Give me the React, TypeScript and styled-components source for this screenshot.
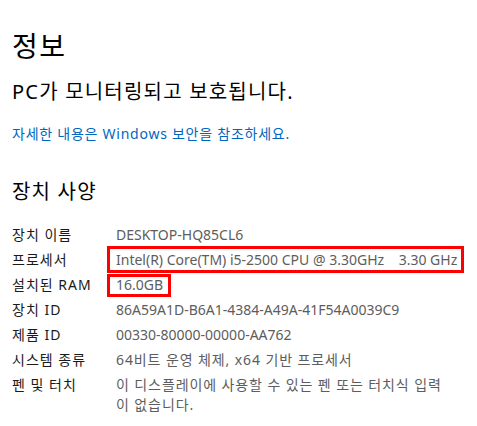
import React from 'react';
import styled, { createGlobalStyle } from 'styled-components';

const GlobalStyle = createGlobalStyle`
  html, body {
    margin: 0;
    padding: 0;
    background: #ffffff;
  }
  body {
    font-family: 'Noto Sans', 'Noto Sans CJK KR', sans-serif;
    color: #000000;
  }
`;

const Page = styled.main`
  width: 477px;
  height: 426px;
  box-sizing: border-box;
  padding: 24px 0 0 12px;
  overflow: hidden;
`;

const Title = styled.h1`
  margin: 0;
  font-size: 28px;
  font-weight: 400;
  line-height: 44px;
  letter-spacing: 1.5px;
`;

const Status = styled.h2`
  margin: 10px 0 0;
  font-size: 20px;
  font-weight: 400;
  line-height: 28px;
  letter-spacing: 1.2px;
`;

const Link = styled.a`
  display: block;
  margin-top: 16px;
  font-size: 14px;
  line-height: 24px;
  color: #0067c0;
  text-decoration: none;
  letter-spacing: 0.75px;
`;

const SectionTitle = styled.h3`
  margin: 32px 0 0;
  font-size: 20px;
  font-weight: 400;
  line-height: 28px;
  letter-spacing: 1.2px;
`;

const SpecList = styled.dl`
  margin: 19px 0 0;
  display: grid;
  grid-template-columns: 104px 333px;
  row-gap: 5px;
  font-size: 14px;
  line-height: 20px;
`;

const Label = styled.dt`
  margin: 0;
  color: #1a1a1a;
  letter-spacing: 1px;
`;

const Value = styled.dd<{ $ko?: boolean }>`
  margin: 0;
  color: #5d5d5d;
  letter-spacing: ${(p) => (p.$ko ? '0.9px' : '0')};
`;

const Marked = styled.span<{ $top: number; $bottom: number; $right: number }>`
  position: relative;
  white-space: nowrap;

  &::after {
    content: '';
    position: absolute;
    left: -9px;
    right: -${(p) => p.$right}px;
    top: -${(p) => p.$top}px;
    bottom: -${(p) => p.$bottom}px;
    border: 3px solid #ff0000;
    pointer-events: none;
  }
`;

type Spec = {
  label: string;
  value: string;
  ko?: boolean;
  mark?: { top: number; bottom: number; right: number };
};

const specs: Spec[] = [
  { label: '장치 이름', value: 'DESKTOP-HQ85CL6' },
  {
    label: '프로세서',
    value: 'Intel(R) Core(TM) i5-2500 CPU @ 3.30GHz\u00a0\u00a0\u00a0\u00a03.30 GHz',
    mark: { top: 4, bottom: 4, right: 7 },
  },
  { label: '설치된 RAM', value: '16.0GB', mark: { top: 1, bottom: 3, right: 8 } },
  { label: '장치 ID', value: '86A59A1D-B6A1-4384-A49A-41F54A0039C9' },
  { label: '제품 ID', value: '00330-80000-00000-AA762' },
  { label: '시스템 종류', value: '64비트 운영 체제, x64 기반 프로세서', ko: true },
  { label: '펜 및 터치', value: '이 디스플레이에 사용할 수 있는 펜 또는 터치식 입력이 없습니다.', ko: true },
];

const App = () => {
  return (
    <>
      <GlobalStyle />
      <Page>
        <Title>정보</Title>
        <Status>PC가 모니터링되고 보호됩니다.</Status>
        <Link href="#">자세한 내용은 Windows 보안을 참조하세요.</Link>
        <SectionTitle>장치 사양</SectionTitle>
        <SpecList>
          {specs.map((s) => (
            <React.Fragment key={s.label}>
              <Label>{s.label}</Label>
              <Value $ko={s.ko}>
                {s.mark ? (
                  <Marked $top={s.mark.top} $bottom={s.mark.bottom} $right={s.mark.right}>
                    {s.value}
                  </Marked>
                ) : (
                  s.value
                )}
              </Value>
            </React.Fragment>
          ))}
        </SpecList>
      </Page>
    </>
  );
};

export default App;
